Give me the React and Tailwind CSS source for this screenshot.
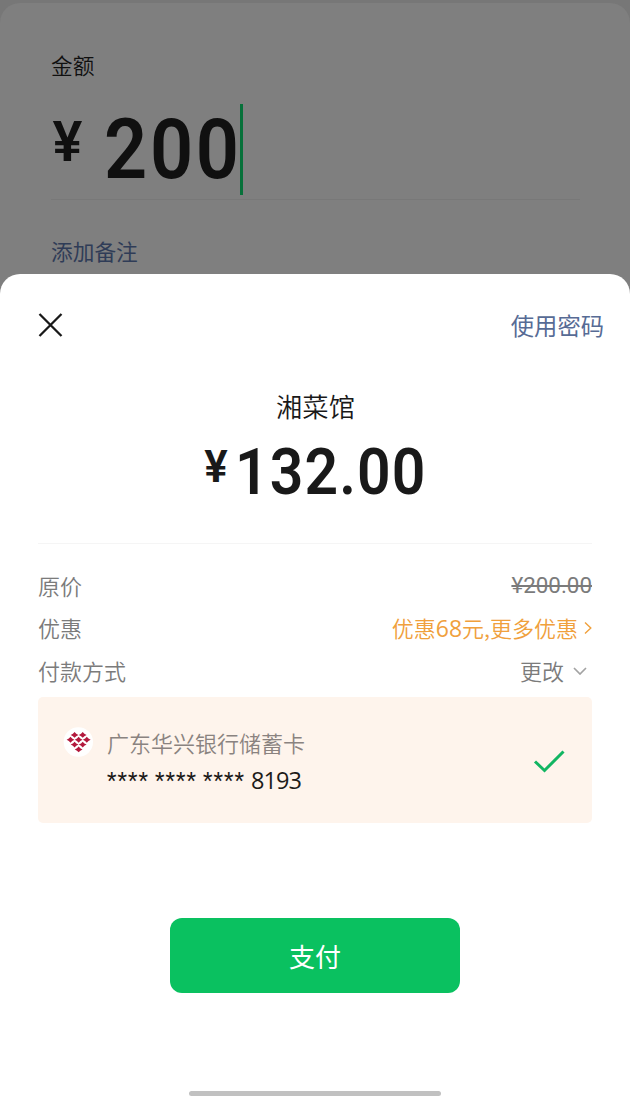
const stars = ['****', '****', '****']

// red dots of the bank mark, laid out as a heart
const dots = [
  [10.8, 7.4], [18.4, 7.4],
  [7, 11.9], [14.6, 11.9], [22.2, 11.9],
  [10.8, 16.4], [18.4, 16.4],
  [14.6, 20.9],
]

function BankLogo() {
  return (
    <svg viewBox="0 0 28 28" className="w-[30px] h-[30px] shrink-0">
      <circle cx="14.3" cy="14" r="13.7" fill="#fff" />
      <g fill="#b3193d">
        {dots.map(([x, y]) => (
          <path
            key={`${x}-${y}`}
            d={`M${x - 3.6} ${y}Q${x - 1.3} ${y - 0.9} ${x} ${y - 2.7}Q${x + 1.3} ${y - 0.9} ${x + 3.6} ${y}Q${x + 1.3} ${y + 0.9} ${x} ${y + 2.7}Q${x - 1.3} ${y + 0.9} ${x - 3.6} ${y}Z`}
          />
        ))}
      </g>
    </svg>
  )
}

function AmountForm() {
  return (
    <div className="h-[274px] bg-[#777777] pt-[3px]">
      <div className="h-[271px] rounded-t-[20px] bg-[#7f7f7f] pl-[51px] pr-[50px] pt-[46px]">
        <div className="h-8 text-[21.7px] leading-8 text-[#101010]">金额</div>
        <div className="mt-[23px] flex h-[96px] items-start border-b border-[#787878] font-['Roboto',sans-serif] font-semibold text-[#101010]">
          <span className="mt-[10px] w-[53px] pl-[1.5px] text-[56px] leading-[56px]">¥</span>
          <span className="mt-[4px] w-[136px] origin-left scale-x-90 text-[84px] leading-[84px] tracking-[3px]">200</span>
          <span className="h-[91px] w-[3px] bg-[#07713a]" />
        </div>
        <div className="mt-[35px] h-8 text-[21.7px] leading-8 font-normal text-[#2f3c57]">添加备注</div>
      </div>
    </div>
  )
}

function Row({ label, children }) {
  return (
    <div className="flex h-[42.5px] items-center justify-between">
      <span className="text-[#7b7b7b]">{label}</span>
      {children}
    </div>
  )
}

export default function App() {
  return (
    <div className="h-[1096px] w-[630px] overflow-hidden bg-[#7f7f7f] font-['Noto_Sans_CJK_SC',sans-serif] font-[350]">
      <AmountForm />
      <div className="flex h-[822px] flex-col rounded-t-[20px] bg-white">
        <div className="mt-[31px] flex h-10 items-center justify-between pl-[38px] pr-[26px]">
          <svg viewBox="0 0 25 25" className="h-[25px] w-[25px]" fill="none" stroke="#191919" strokeWidth="2.3">
            <path d="M1.5 1l22 22M23.5 1l-22 22" />
          </svg>
          <button className="text-[23.3px] leading-10 font-normal text-[#576b95]">使用密码</button>
        </div>

        <div className="mt-[43px] h-9 pl-[1px] text-center text-[26.3px] leading-9 text-[#191919]">湘菜馆</div>
        <div className="flex h-[80px] items-start justify-center font-['Roboto',sans-serif] font-semibold text-[#191919]">
          <span className="mt-[21px] mr-[7px] text-[44px] leading-[44px]">¥</span>
          <span className="mt-[17px] w-[191px] origin-left scale-x-[0.92] text-[64px] leading-[64px] tracking-[1.2px]">132.00</span>
        </div>

        <div className="mx-[38px] mt-[39px] border-t border-[#f5f5f5] pt-[20px] text-[22px]">
          <Row label="原价">
            <span className="pt-[2px] font-['Roboto',sans-serif] text-[22.4px] font-normal text-[#7b7b7b] line-through decoration-[1.5px]">¥200.00</span>
          </Row>
          <Row label="优惠">
            <span className="flex items-center text-[#f0a03c]">
              <span>优惠<span className="font-['Open_Sans',sans-serif] text-[23px] leading-none font-normal">68</span>元,更多优惠</span>
              <svg viewBox="0 0 8 14" className="ml-[6px] h-[14px] w-[8px]" fill="none" stroke="#f0a03c" strokeWidth="1.4">
                <path d="M1 1.5l5.8 5.5L1 12.5" />
              </svg>
            </span>
          </Row>
          <Row label="付款方式">
            <span className="flex items-center text-[#7b7b7b]">
              更改
              <svg viewBox="0 0 14 8" className="mt-[2px] mr-[5px] ml-[9px] h-[8px] w-[14px]" fill="none" stroke="#a3a3a3" strokeWidth="1.7">
                <path d="M1 1l6 6 6-6" />
              </svg>
            </span>
          </Row>
        </div>

        <div className="mx-[38px] mt-[5px] flex h-[126px] shrink-0 items-center rounded-[5px] bg-[#fef4ec] pr-[27px] pl-[25px]">
          <div className="flex-1">
            <div className="flex h-9 items-center">
              <BankLogo />
              <span className="ml-[14px] pt-[2px] text-[22px] text-[#8a8380]">广东华兴银行储蓄卡</span>
            </div>
            <div className="flex h-9 items-center pl-[44px] font-['Open_Sans',sans-serif] text-[#1d1b19]">
              {stars.map((s, i) => (
                <span key={i} className="w-[48px] pt-[6px] font-['Roboto',sans-serif] text-[22px] font-normal tracking-[1px]">{s}</span>
              ))}
              <span className="pt-[6px] text-[23.5px] font-normal tracking-[-0.9px]">8193</span>
            </div>
          </div>
          <svg viewBox="0 0 32 24" className="mt-[2px] h-6 w-8" fill="none" stroke="#12b562" strokeWidth="3">
            <path d="M2 12.5l9.5 9L30.5 2.5" />
          </svg>
        </div>

        <button className="mx-auto mt-[95px] h-[75px] w-[290px] shrink-0 rounded-[12px] bg-[#0ac160] text-[26px] font-normal text-white">
          支付
        </button>
        <div className="mx-auto mt-[98px] h-[5px] w-[252px] shrink-0 rounded-full bg-[#c1c1c1]" />
      </div>
    </div>
  )
}
